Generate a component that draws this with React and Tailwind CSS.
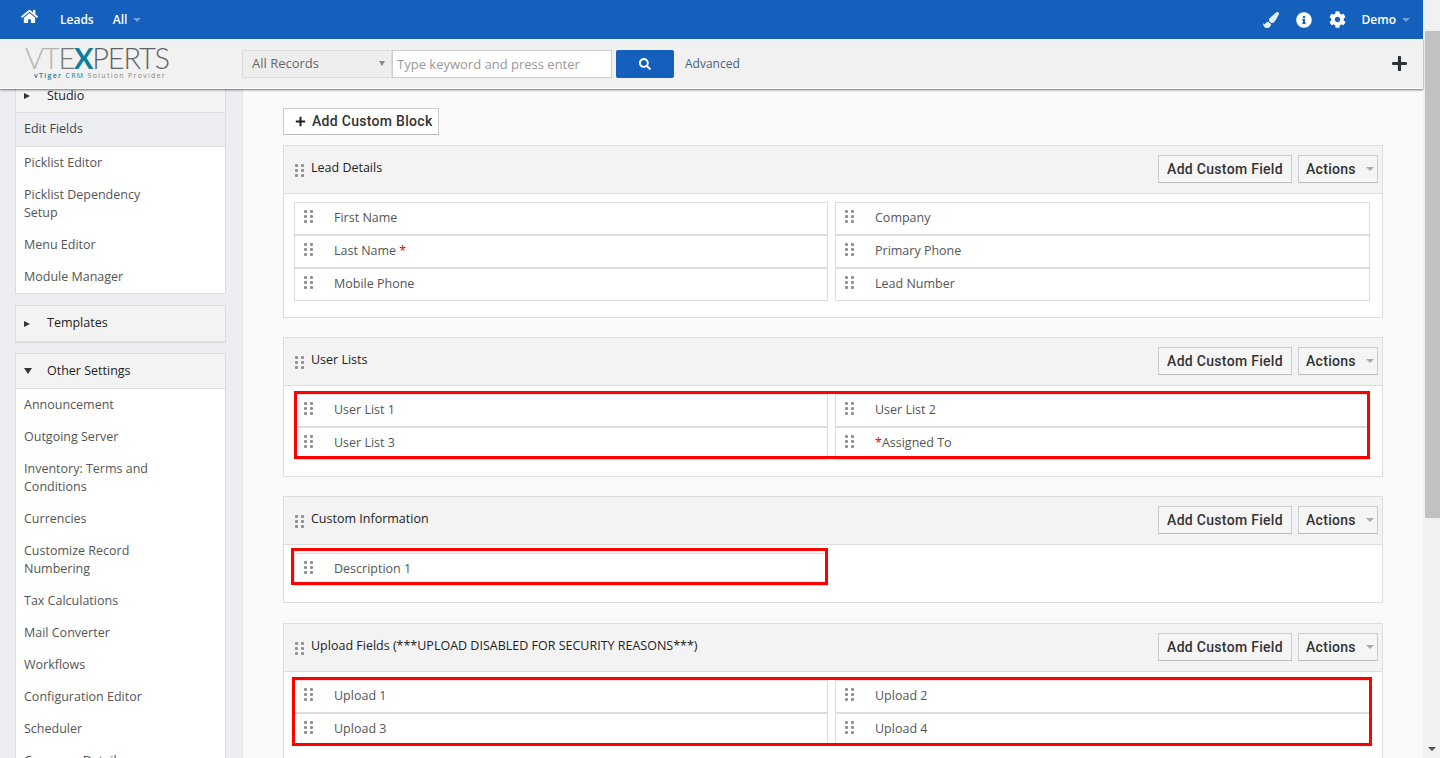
import React from 'react';
import { FaHome, FaPaintBrush, FaInfoCircle, FaCog, FaSearch, FaPlus } from 'react-icons/fa';

const openSans = { fontFamily: '"Open Sans", sans-serif' };

function Dots({ className }) {
  return (
    <svg width="9" height="13" viewBox="0 0 9 13" className={className} fill="#8f8f8f">
      <rect x="0" y="0" width="3" height="3" rx="1" />
      <rect x="6" y="0" width="3" height="3" rx="1" />
      <rect x="0" y="5" width="3" height="3" rx="1" />
      <rect x="6" y="5" width="3" height="3" rx="1" />
      <rect x="0" y="10" width="3" height="3" rx="1" />
      <rect x="6" y="10" width="3" height="3" rx="1" />
    </svg>
  );
}

function Caret({ className = 'border-t-[#9a9a9a]' }) {
  return <span className={`inline-block w-0 h-0 border-x-[4px] border-x-transparent border-t-[4px] ${className}`} />;
}

function Field({ label, star, prefixStar }) {
  return (
    <div className="h-[33px] bg-white border border-[#ddd] flex items-start">
      <Dots className="ml-[9px] mt-[7px]" />
      <span className="ml-[21px] mt-[6px] text-[12.5px] leading-[18px] text-[#555]">
        {prefixStar && <span className="text-[#e00]">*</span>}
        {label}
        {star && <span className="text-[#e00]"> *</span>}
      </span>
    </div>
  );
}

function Block({ title, fields, highlight, className = 'mb-[19px]' }) {
  return (
    <div className={`border border-[#ddd] bg-white ${className}`}>
      <div className="h-[48px] bg-[#f3f3f3] border-b border-[#ddd] flex items-center pl-[11px] pr-[4px]">
        <Dots className="mt-[2px]" />
        <span className="ml-[7px] text-[12.5px] text-[#222] -mt-[2px]">{title}</span>
        <div className="ml-auto flex items-center gap-[6px] mt-[-1px]">
          <button className="h-[28px] w-[134px] bg-[#f5f5f5] border border-[#ccc] border-b-[#bbb] text-[14px] font-medium text-[#333] tracking-[0.3px]" style={{ fontFamily: 'Roboto, sans-serif' }}>
            Add Custom Field
          </button>
          <button className="h-[28px] w-[80px] bg-[#f5f5f5] border border-[#ccc] border-b-[#bbb] text-[14px] font-medium text-[#333] tracking-[0.3px] flex items-center pl-[7px]" style={{ fontFamily: 'Roboto, sans-serif' }}>
            Actions
            <Caret className="border-t-[#aaa] ml-[10px]" />
          </button>
        </div>
      </div>
      <div className="relative pt-[8px] pb-[16px] pl-[10px] pr-[12px]">
        <div className="grid grid-cols-[534px_535px] gap-x-[7px]">
          {fields.map((f) => (
            <Field key={f.label} {...f} />
          ))}
        </div>
        {highlight && <div className={`absolute border-[3px] border-[#f00] ${highlight}`} />}
      </div>
    </div>
  );
}

function SideItem({ children }) {
  return <div className="px-[8px] py-[7px] text-[12.5px] leading-[18px] text-[#555] max-w-[135px] box-content">{children}</div>;
}

function SideHead({ children, open, className = '' }) {
  return (
    <div className={`flex items-center bg-[#f3f3f3] text-[12.5px] text-[#222] ${className}`}>
      <span className="w-[31px] pl-[8px] flex items-center">
        {open ? (
          <span className="w-0 h-0 border-x-[4px] border-x-transparent border-t-[6px] border-t-[#333]" />
        ) : (
          <span className="w-0 h-0 border-y-[3.5px] border-y-transparent border-l-[6px] border-l-[#333]" />
        )}
      </span>
      {children}
    </div>
  );
}

export default function App() {
  return (
    <div className="flex h-[758px] w-[1440px] overflow-hidden bg-[#f1f1f1]" style={openSans}>
      <div className="w-[1423px] flex flex-col">
        {/* top bar */}
        <header className="h-[39px] shrink-0 bg-[#1560bd] text-white flex items-center text-[12px] font-semibold">
          <FaHome className="ml-[21px] mb-[6px] text-[17px]" />
          <span className="ml-[22px]">Leads</span>
          <span className="ml-[19px]">All</span>
          <Caret className="ml-[6px] border-t-[#6f9fdc]" />
          <div className="ml-auto flex items-center">
            <FaPaintBrush className="text-[16px] text-[#e6eef8]" />
            <FaInfoCircle className="ml-[17px] text-[16px]" />
            <FaCog className="ml-[17px] text-[17px]" />
            <span className="ml-[16px]">Demo</span>
            <Caret className="ml-[6px] mr-[13px] border-t-[#6f9fdc]" />
          </div>
        </header>

        {/* search bar */}
        <div className="h-[50px] shrink-0 bg-[#f1f1f1] border-b border-white shadow-[0_1px_2px_rgba(0,0,0,0.55)] relative z-10 flex items-center">
          <div className="w-[242px] pl-[25px] shrink-0 mb-[2px]">
            <div className="text-[29px] leading-[25px] tracking-[-1.2px] font-light text-[#5f6368] whitespace-nowrap" style={{ fontFamily: 'Lato, sans-serif' }}>
              <span className="text-[#b4b4b4]">VT</span>
              <span className="text-[#777]">E</span>
              <span className="text-[#0f7f9b] font-bold">X</span>
              <span>PERTS</span>
            </div>
            <div className="text-[7px] leading-[9px] tracking-[1.3px] pl-[9px] mt-[1px] text-[#888] whitespace-nowrap">
              <span className="text-[#0f7f9b] font-semibold">vTiger</span> <span className="text-[#0f7f9b]">CRM</span> Solution Provider
            </div>
          </div>
          <div className="h-[28px] w-[150px] bg-[#eee] border border-[#ddd] flex items-center pl-[9px] text-[13px] text-[#666]">
            All Records
            <span className="ml-auto mr-[6px] w-0 h-0 border-x-[3.5px] border-x-transparent border-t-[5px] border-t-[#888]" />
          </div>
          <input
            className="h-[28px] w-[220px] bg-white border border-[#ccc] px-[4px] text-[13px] outline-none placeholder:text-[#999]"
            placeholder="Type keyword and press enter"
          />
          <button className="ml-[4px] h-[28px] w-[58px] bg-[#1560bd] rounded-[2px] flex items-center justify-center text-white">
            <FaSearch className="text-[12px]" />
          </button>
          <span className="ml-[11px] text-[12px] text-[#4a5f7a]">Advanced</span>
          <FaPlus className="ml-auto mr-[15px] text-[17px] text-[#2c3338]" />
        </div>

        <div className="flex-1 min-h-0 flex overflow-hidden">
          {/* sidebar */}
          <aside className="w-[243px] shrink-0 bg-[#eceef2] pl-[15px] pr-[16px] border-r border-[#e6e6e6]">
            <div className="bg-white border-x border-b border-[#ddd] mb-[11px]">
              <SideHead className="h-[24px] border-b border-[#ddd] pb-[9px]">Studio</SideHead>
              <div className="h-[34px] px-[8px] flex items-center bg-[#eceef2] border-b border-[#ddd] text-[12.5px] text-[#444]">Edit Fields</div>
              <SideItem>Picklist Editor</SideItem>
              <SideItem>Picklist Dependency Setup</SideItem>
              <SideItem>Menu Editor</SideItem>
              <SideItem>Module Manager</SideItem>
            </div>
            <div className="border border-[#ddd] border-b-2 mb-[10px]">
              <SideHead className="h-[35px]">Templates</SideHead>
            </div>
            <div className="bg-white border border-[#ddd]">
              <SideHead className="h-[35px] border-b border-[#ddd]" open>Other Settings</SideHead>
              <SideItem>Announcement</SideItem>
              <SideItem>Outgoing Server</SideItem>
              <SideItem>Inventory: Terms and Conditions</SideItem>
              <SideItem>Currencies</SideItem>
              <SideItem>Customize Record Numbering</SideItem>
              <SideItem>Tax Calculations</SideItem>
              <SideItem>Mail Converter</SideItem>
              <SideItem>Workflows</SideItem>
              <SideItem>Configuration Editor</SideItem>
              <SideItem>Scheduler</SideItem>
              <SideItem>Company Details</SideItem>
            </div>
          </aside>

          {/* main */}
          <main className="flex-1 min-w-0 bg-[#fafafa] pl-[40px] pr-[40px] pt-[19px]">
            <button className="h-[27px] w-[156px] bg-white border border-[#ccc] border-b-[#bbb] flex items-center pl-[11px] text-[14px] font-medium text-[#333] tracking-[0.3px] mb-[10px]" style={{ fontFamily: 'Roboto, sans-serif' }}>
              <FaPlus className="text-[11px] mr-[6px] text-[#222]" />
              Add Custom Block
            </button>
            <Block
              title="Lead Details"
              fields={[
                { label: 'First Name' },
                { label: 'Company' },
                { label: 'Last Name', star: true },
                { label: 'Primary Phone' },
                { label: 'Mobile Phone' },
                { label: 'Lead Number' },
              ]}
            />
            <Block
              title="User Lists"
              highlight="left-[10px] top-[5px] w-[1076px] h-[68px]"
              fields={[
                { label: 'User List 1' },
                { label: 'User List 2' },
                { label: 'User List 3' },
                { label: 'Assigned To', prefixStar: true },
              ]}
            />
            <Block
              title="Custom Information"
              className="mb-[20px]"
              highlight="left-[7px] top-[3px] w-[537px] h-[37px]"
              fields={[{ label: 'Description 1' }]}
            />
            <Block
              title="Upload Fields (***UPLOAD DISABLED FOR SECURITY REASONS***)"
              highlight="left-[8px] top-[5px] w-[1080px] h-[69px]"
              fields={[
                { label: 'Upload 1' },
                { label: 'Upload 2' },
                { label: 'Upload 3' },
                { label: 'Upload 4' },
              ]}
            />
          </main>
        </div>
      </div>

      {/* scrollbar */}
      <div className="w-[17px] shrink-0 bg-[#f1f1f1] flex flex-col items-end">
        <div className="w-[15px] h-[487px] mt-[31px] bg-[#c1c1c1]" />
        <span className="mt-auto mb-[7px] mr-[4px] w-0 h-0 border-x-[4px] border-x-transparent border-t-[4px] border-t-[#505050]" />
      </div>
    </div>
  );
}
